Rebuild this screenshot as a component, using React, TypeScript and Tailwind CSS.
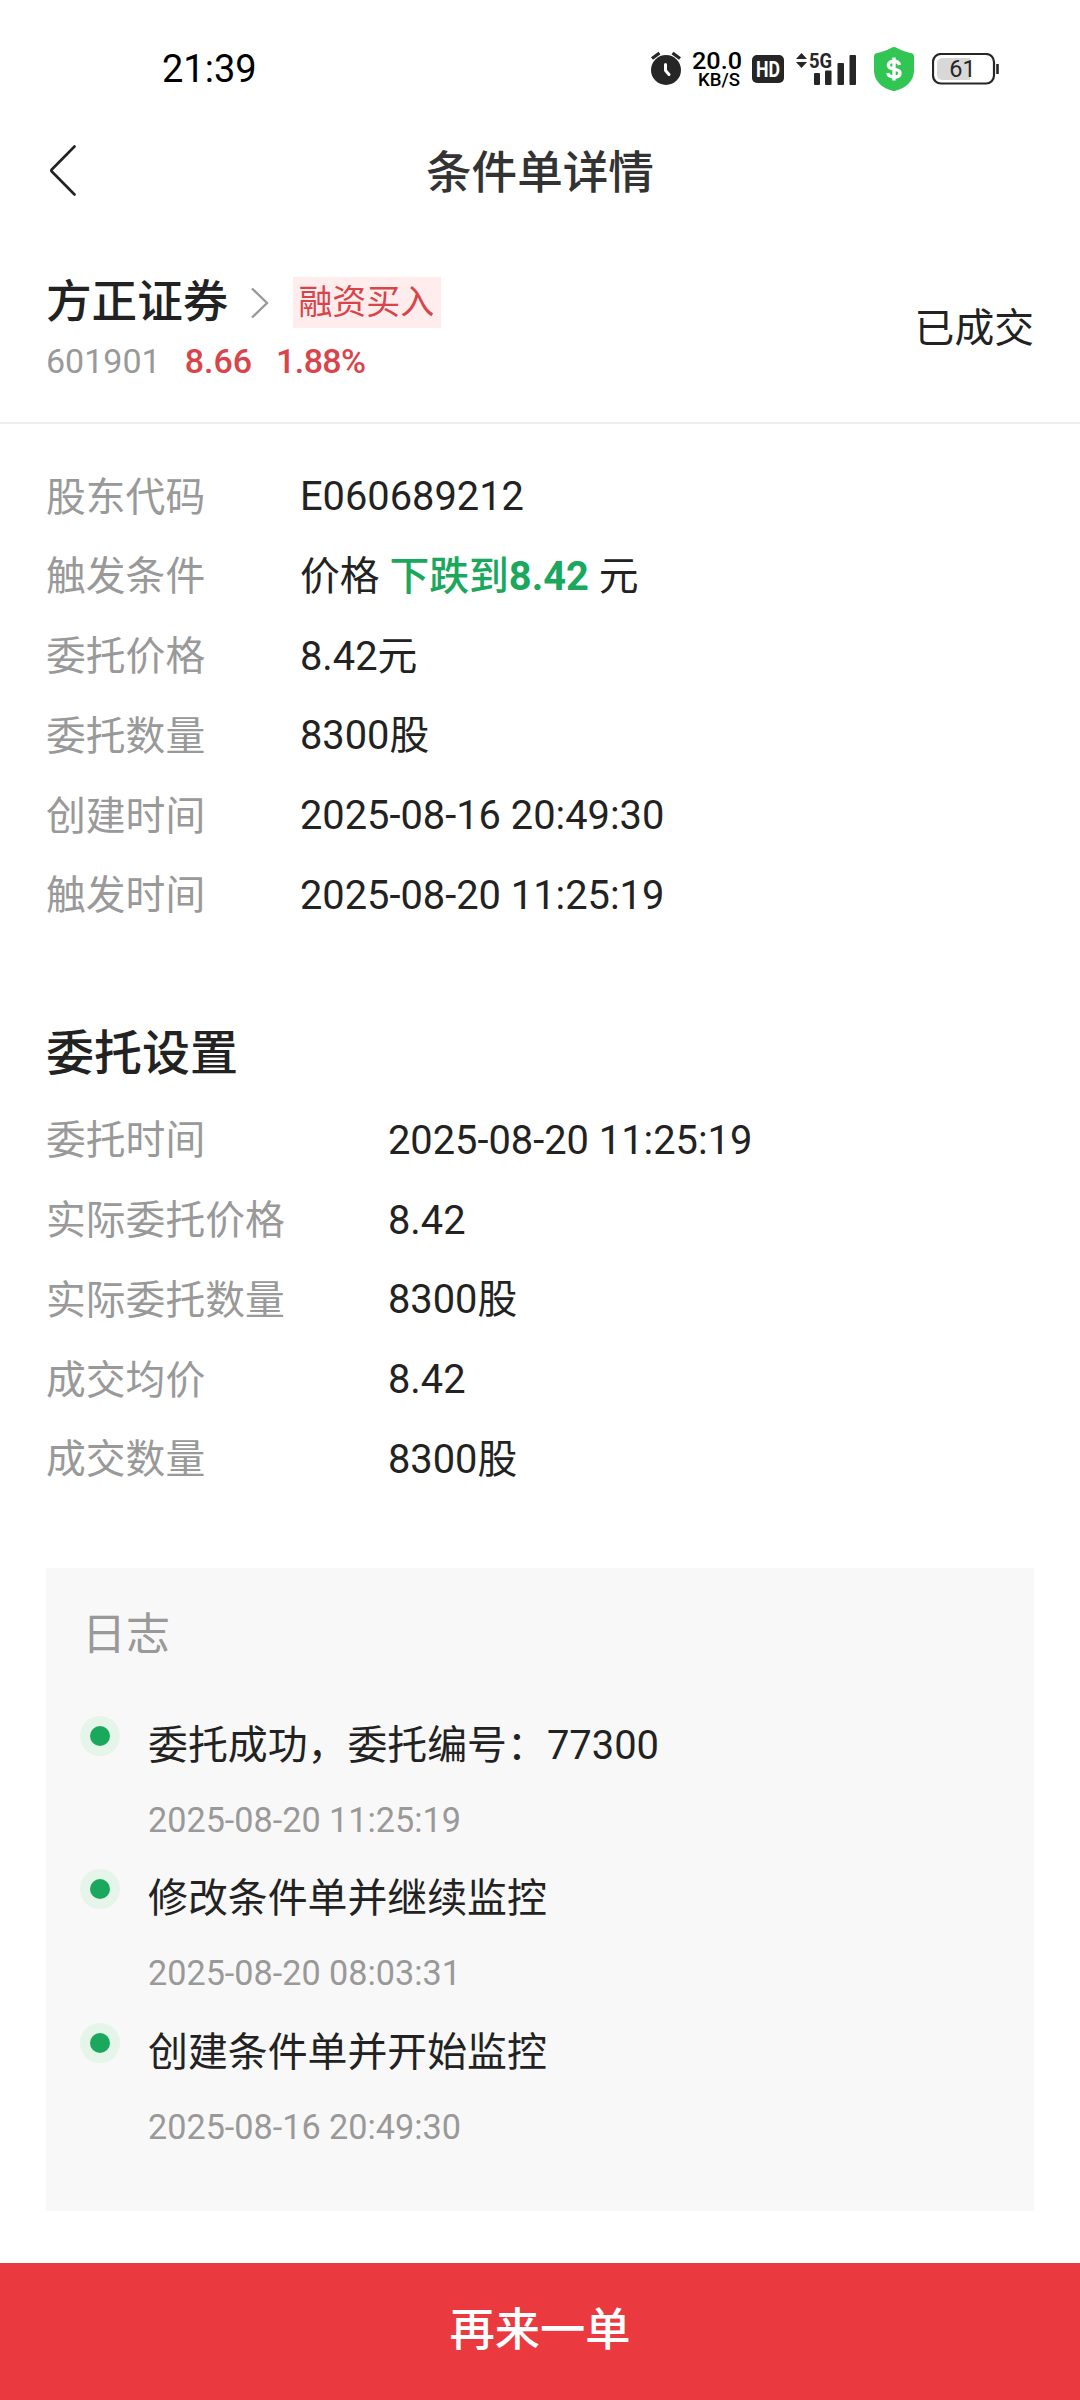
import type { ReactNode } from "react"

interface Field {
  label: string
  value: ReactNode
}

interface LogEntry {
  id: number
  title: string
  time: string
}

const orderFields: Field[] = [
  { label: "股东代码", value: "E060689212" },
  {
    label: "触发条件",
    value: (
      <>
        价格 <span className="font-bold text-[#1aa85c]"><span className="font-medium">下跌到</span>8.42</span> 元
      </>
    ),
  },
  { label: "委托价格", value: "8.42元" },
  { label: "委托数量", value: "8300股" },
  { label: "创建时间", value: "2025-08-16 20:49:30" },
  { label: "触发时间", value: "2025-08-20 11:25:19" },
]

const settingFields: Field[] = [
  { label: "委托时间", value: "2025-08-20 11:25:19" },
  { label: "实际委托价格", value: "8.42" },
  { label: "实际委托数量", value: "8300股" },
  { label: "成交均价", value: "8.42" },
  { label: "成交数量", value: "8300股" },
]

const logs: LogEntry[] = [
  { id: 1, title: "委托成功，委托编号：77300", time: "2025-08-20 11:25:19" },
  { id: 2, title: "修改条件单并继续监控", time: "2025-08-20 08:03:31" },
  { id: 3, title: "创建条件单并开始监控", time: "2025-08-16 20:49:30" },
]

function StatusBar() {
  return (
    <div className="flex h-[112px] items-center pt-[26px] pr-[81px] pl-[162px] text-black">
      <span className="text-[38px] leading-none">21:39</span>

      <div className="ml-auto flex items-center">
        {/* alarm */}
        <svg width="32" height="36" viewBox="0 0 32 36" fill="none">
          <circle cx="16" cy="19" r="15" fill="#262626" />
          <path d="M2 7.500 9.500 2M30 7.500 22.500 2" stroke="#262626" strokeWidth="3.400" />
          <path d="M15.500 13.500v6l3.500 4" stroke="#fff" strokeWidth="3" strokeLinecap="round" />
        </svg>

        {/* network speed */}
        <svg className="ml-[9px] overflow-visible" width="52" height="40" viewBox="0 0 52 40" fill="#000" fontWeight="500">
          <text x="1" y="20" fontSize="24" textLength="50" lengthAdjust="spacingAndGlyphs">
            20.0
          </text>
          <text x="7" y="37" fontSize="17.500" textLength="42" lengthAdjust="spacingAndGlyphs">
            KB/S
          </text>
        </svg>

        {/* HD voice */}
        <svg className="ml-[9px]" width="32" height="28" viewBox="0 0 32 28">
          <rect width="32" height="28" rx="5" fill="#262626" />
          <text x="4" y="21.500" fontSize="21.500" fontWeight="700" fill="#fff" textLength="24" lengthAdjust="spacingAndGlyphs">
            HD
          </text>
        </svg>

        {/* mobile signal */}
        <svg className="ml-[12px] overflow-visible" width="60" height="42" viewBox="0 -4 60 42" fill="#262626">
          <path d="M0 7 5.500 1 11 7zM0 10h11l-5.500 6z" />
          <text x="13" y="16" fontSize="20" fontWeight="700" textLength="23" lengthAdjust="spacingAndGlyphs">
            5G
          </text>
          <rect x="18" y="21" width="6" height="12" rx="1" />
          <rect x="29" y="18.500" width="6.500" height="14.500" rx="1" />
          <rect x="41.500" y="11" width="6.500" height="22" rx="1" />
          <rect x="53.500" y="3" width="6.500" height="30" rx="1" />
        </svg>

        {/* payment shield */}
        <svg className="ml-[18px]" width="40" height="44" viewBox="0 0 40 44" fill="none">
          <path
            d="M20 0c1 0 2 .4 3 1 4.500 2.600 9 4 14 5 2 .4 3 1.600 3 3.500v14C40 34 32 41 21.500 43.700c-1 .3-2 .3-3 0C8 41 0 34 0 23.500v-14C0 7.600 1 6.400 3 6c5-1 9.500-2.400 14-5 1-.6 2-1 3-1z"
            fill="#31c553"
          />
          <path
            d="M25.500 18c-.6-2.300-2.600-3.700-5.500-3.700-3.400 0-5.600 1.500-5.600 4 0 5.400 11.600 2.400 11.600 7.700 0 2.600-2.500 4.100-6 4.100-3.300 0-5.600-1.400-6.200-4.100M20 10.500v23"
            stroke="#fff"
            strokeWidth="3.400"
          />
        </svg>

        {/* battery */}
        <svg className="ml-[18px]" width="67" height="32" viewBox="0 0 67 32" fill="none">
          <rect x="1" y="1" width="61" height="29.500" rx="8" stroke="#262626" strokeWidth="2.200" />
          <path d="M10 5h28v22H10a5 5 0 0 1-5-5V10a5 5 0 0 1 5-5z" fill="#d8d8d8" />
          <path d="M65.500 11v10" stroke="#262626" strokeWidth="2.600" />
          <text x="30.500" y="24.300" fontSize="23.500" fill="#262626" textAnchor="middle">
            61
          </text>
        </svg>
      </div>
    </div>
  )
}

function FieldList({ fields, labelClass }: { fields: Field[]; labelClass: string }) {
  return (
    <dl>
      {fields.map((field) => (
        <div key={field.label} className="flex h-[79.800px] items-center text-[39.800px] leading-none">
          <dt className={`${labelClass} pt-[1px] text-[#999999]`}>{field.label}</dt>
          <dd>{field.value}</dd>
        </div>
      ))}
    </dl>
  )
}

export default function App() {
  return (
    <main className="flex h-[2400px] w-[1080px] flex-col bg-white font-['Roboto','Noto_Sans_CJK_SC',sans-serif] whitespace-nowrap text-[#222222]">
      <StatusBar />

      <header className="grid h-[120px] grid-cols-3 items-center px-[46px]">
        <button aria-label="返回" className="pb-[2px] pl-[4px]">
          <svg width="28" height="52" viewBox="0 0 28 52" fill="none" stroke="#222" strokeWidth="2.600" strokeLinecap="round" strokeLinejoin="round">
            <path d="M24.500 1.500 1.800 24.500q-1 1 0 2L24.500 49.500" />
          </svg>
        </button>
        <h1 className="justify-self-center pt-[4px] text-[45.600px] leading-[60px] font-medium text-[#333333]">条件单详情</h1>
      </header>

      <section className="flex h-[192px] items-start justify-between border-b-2 border-[#eeeeee] px-[46px] pt-[45px]">
        <div>
          <div className="flex h-[51px] items-center">
            <h2 className="text-[45.600px] leading-none font-medium">方正证券</h2>
            <svg className="ml-[23px]" width="18" height="34" viewBox="0 0 18 34" fill="none" stroke="#999" strokeWidth="2.400">
              <path d="M1 2.500 16 17 1 31.500" />
            </svg>
            <span className="ml-[24px] flex h-[51px] w-[148px] items-center justify-center bg-[#ffeded] pr-[2px] pb-[2px] text-[34px] leading-none text-[#d9434a]">
              融资买入
            </span>
          </div>
          <div className="mt-[13px] flex h-[40px] items-center text-[34px] leading-none">
            <span className="text-[#999999]">601901</span>
            <span className="ml-[24px] font-medium text-[#d9434a]">8.66</span>
            <span className="ml-[24px] font-medium tracking-[-0.600px] text-[#d9434a]">1.88%</span>
          </div>
        </div>
        <span className="mt-[31px] text-[39.800px] leading-[42px]">已成交</span>
      </section>

      <section className="px-[46px] pt-[33px]">
        <FieldList fields={orderFields} labelClass="w-[254px]" />
      </section>

      <section className="mt-[88px] px-[46px]">
        <h2 className="mb-[17px] text-[48px] leading-[60px] font-medium">委托设置</h2>
        <FieldList fields={settingFields} labelClass="w-[342px]" />
      </section>

      <section className="mx-[46px] mt-[68px] h-[643px] bg-[#f8f8f8] pt-[35px] pl-[34px]">
        <h3 className="pl-[2px] text-[44px] leading-[64px] text-[#999999]">日志</h3>
        <ul className="mt-[49px]">
          {logs.map((log) => (
            <li key={log.id} className="flex h-[153.400px] gap-[28px]">
              <span className="flex size-[40px] items-center justify-center rounded-full bg-[#e6f5ea]">
                <span className="size-[20px] rounded-full bg-[#1aa85c]" />
              </span>
              <div>
                <p className="pt-[2px] text-[39.900px] leading-[56px]">{log.title}</p>
                <p className="mt-[26px] text-[34.200px] leading-[40px] text-[#999999]">{log.time}</p>
              </div>
            </li>
          ))}
        </ul>
      </section>

      <button className="mt-auto h-[137px] bg-[#ea3a40] pb-[2px] text-[45.300px] leading-none font-medium text-white">
        再来一单
      </button>
    </main>
  )
}
